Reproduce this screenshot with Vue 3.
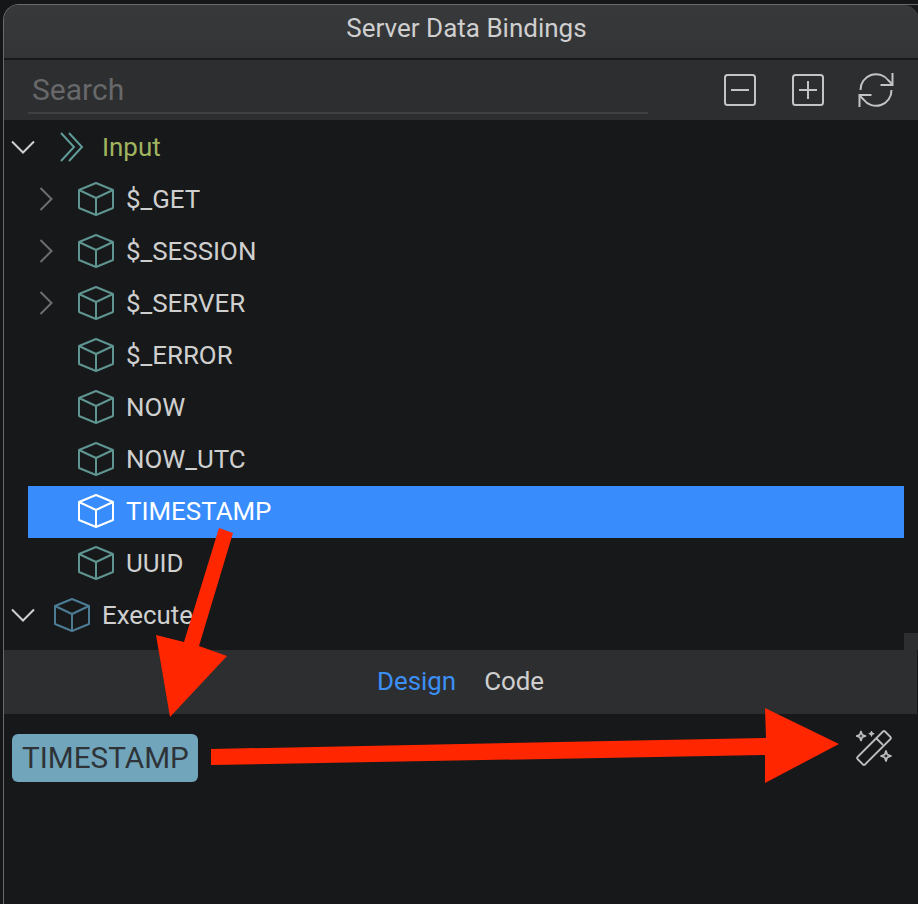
<script setup>
const rows = [
  { label: '$_GET', arrow: true },
  { label: '$_SESSION', arrow: true },
  { label: '$_SERVER', arrow: true },
  { label: '$_ERROR' },
  { label: 'NOW' },
  { label: 'NOW_UTC' },
  { label: 'TIMESTAMP', selected: true },
  { label: 'UUID' },
]
</script>

<template>
  <div class="page">
    <div class="window">
      <header class="title">Server Data Bindings</header>
      <div class="toolbar">
        <div class="search">Search</div>
        <div class="tools">
          <svg class="tool" viewBox="0 0 34 34" fill="none" stroke="#c4c4c4" stroke-width="2">
            <rect x="2" y="2" width="30" height="30" rx="2.5" />
            <path d="M8 17h18" />
          </svg>
          <svg class="tool" viewBox="0 0 34 34" fill="none" stroke="#c4c4c4" stroke-width="2">
            <rect x="2" y="2" width="30" height="30" rx="2.5" />
            <path d="M8 17h18M17 8v18" />
          </svg>
          <svg class="tool refresh" viewBox="0 0 36 36" fill="none" stroke="#c4c4c4" stroke-width="2">
            <path d="M2.500 18a15.500 15.500 0 0 1 28-9.500L34 12" />
            <path d="M34.500 1v12h-12" />
            <path d="M33.500 18a15.500 15.500 0 0 1-28 9.500L2 24" />
            <path d="M1.500 35V23h12" />
          </svg>
        </div>
      </div>

      <div class="tree">
        <div class="row root">
          <svg class="chev-down" viewBox="0 0 24 14" fill="none" stroke="#d0d0d0" stroke-width="2"><path d="M1 1.500l11 11 11-11" /></svg>
          <svg class="chevrons" viewBox="0 0 24 30" fill="none" stroke="#5f9c98" stroke-width="2"><path d="M1 1l13 14L1 29M9 1l13 14L9 29" /></svg>
          <span class="input-label">Input</span>
        </div>

        <div v-for="r in rows" :key="r.label" class="row child" :class="{ selected: r.selected }">
          <span class="arrow-slot">
            <svg v-if="r.arrow" class="chev-right" viewBox="0 0 14 24" fill="none" stroke="#6e6e6e" stroke-width="2"><path d="M1.500 1l11 11-11 11" /></svg>
          </span>
          <svg class="cube" viewBox="0 0 36 34" fill="none" stroke-width="2" stroke-linejoin="round">
            <path d="M18 1 35 8v18l-17 7-17-7V8zM1 8l17 8 17-8M18 16v17" />
          </svg>
          <span>{{ r.label }}</span>
        </div>

        <div class="row root">
          <svg class="chev-down" viewBox="0 0 24 14" fill="none" stroke="#d0d0d0" stroke-width="2"><path d="M1 1.500l11 11 11-11" /></svg>
          <svg class="cube execute" viewBox="0 0 36 34" fill="none" stroke-width="2" stroke-linejoin="round">
            <path d="M18 1 35 8v18l-17 7-17-7V8zM1 8l17 8 17-8M18 16v17" />
          </svg>
          <span>Execute</span>
        </div>
        <div class="scroll-corner"></div>
      </div>

      <div class="tabs">
        <span class="tab active">Design</span>
        <span class="tab">Code</span>
      </div>

      <div class="editor">
        <span class="chip">TIMESTAMP</span>
        <svg class="wand" viewBox="0 0 38 38" fill="none" stroke="#bdbdbd" stroke-width="1.800" stroke-linejoin="round">
          <path d="M29 1.500l5.500 5.500a1.500 1.500 0 0 1 0 2L9 34.500a1.500 1.500 0 0 1-2 0L1.500 29a1.500 1.500 0 0 1 0-2L27 1.500a1.500 1.500 0 0 1 2 0z" />
          <path d="M20.500 8.500l6.500 6.500" />
          <path d="M5 1.500 6.200 4.800 9.500 6 6.200 7.200 5 10.500 3.800 7.200 0.500 6 3.800 4.800z" />
          <path d="M15.500 1 16.200 3 18.200 3.700 16.200 4.400 15.500 6.400 14.800 4.400 12.800 3.700 14.800 3z" fill="#bdbdbd" stroke-width="1" />
          <path d="M30 21 31.300 24.700 35 26 31.300 27.300 30 31 28.700 27.300 25 26 28.700 24.700z" />
        </svg>
      </div>
    </div>

    <svg class="annotations" viewBox="0 0 918 904">
      <path d="M219 528 233 533 199 646 227 656 170 717 156 635 184 642z" fill="#ff2600" />
      <path d="M211 749 766 738 765 708 839 744 765 783 765 755 211 765z" fill="#ff2600" />
    </svg>
  </div>
</template>

<style>
html, body { margin: 0; background: #151618; }
</style>

<style scoped>
.page {
  position: relative;
  width: 918px;
  height: 904px;
  overflow: hidden;
  background: #151618;
  font-family: Roboto, "Liberation Sans", sans-serif;
  color: #cfcfcf;
  font-size: 25.900px;
}
.window {
  box-sizing: border-box;
  height: 908px;
  margin: 4px 0 0 3px;
  width: 930px;
  border-left: 1px solid #6a6a6b;
  border-top: 1px solid #6a6a6b;
  border-radius: 16px 16px 0 0;
  display: flex;
  flex-direction: column;
  background: #16181a;
}
.title {
  height: 55px;
  flex: none;
  width: 915px;
  box-sizing: border-box;
  padding: 0 0 8px 10px;
  border-radius: 15px 15px 0 0;
  background: linear-gradient(#38393b, #333436);
  border-bottom: 2px solid #18191b;
  display: flex;
  align-items: center;
  justify-content: center;
  font-size: 26px;
  color: #cfcfcf;
}
.toolbar {
  height: 60px;
  flex: none;
  display: flex;
  align-items: center;
  background: #2d2e30;
  padding-left: 24px;
}
.search {
  width: 620px;
  height: 42px;
  margin-top: 6px;
  box-sizing: border-box;
  padding-left: 4px;
  border-bottom: 2px solid #3f4042;
  color: #67686a;
  font-size: 30px;
  line-height: 36px;
}
.tools {
  display: flex;
  align-items: center;
  margin-left: 75px;
  gap: 34px;
}
.tool { width: 34px; height: 34px; display: block; }
.tool.refresh { width: 36px; height: 36px; margin-left: -1px; }
.tree {
  position: relative;
  height: 530px;
  flex: none;
  overflow: hidden;
  box-sizing: border-box;
  padding-top: 2px;
}
.row {
  height: 52px;
  box-sizing: border-box;
  padding-bottom: 2px;
  display: flex;
  align-items: center;
}
.root { padding-left: 7px; }
.chev-down { width: 24px; height: 14px; flex: none; }
.chevrons { width: 24px; height: 30px; margin-left: 25px; flex: none; }
.input-label { margin-left: 18px; color: #a0b460; }
.child { margin-left: 24px; width: 876px; }
.arrow-slot { width: 50px; flex: none; display: flex; padding-left: 11px; box-sizing: border-box; }
.chev-right { width: 14px; height: 24px; }
.cube { width: 36px; height: 34px; flex: none; margin-right: 12px; stroke: #5f9590; }
.execute { margin-left: 19px; margin-right: 12px; stroke: #4c7b94; }
.selected { background: #388cfb; color: #fff; }
.selected .cube { stroke: #fff; }
.scroll-corner {
  position: absolute;
  left: 900px;
  top: 513px;
  width: 14px;
  height: 17px;
  background: #2d2e30;
}
.tabs {
  height: 64px;
  flex: none;
  box-sizing: border-box;
  padding-bottom: 2px;
  background: #2d2e30;
  display: flex;
  align-items: center;
  justify-content: center;
  gap: 28px;
  width: 913px;
}
.tab.active { color: #3b8ff5; }
.editor {
  position: relative;
  flex: 1;
  padding: 20px 0 0 8px;
}
.chip {
  display: inline-block;
  box-sizing: border-box;
  height: 48px;
  line-height: 47px;
  padding: 0 9px 0 10px;
  border-radius: 6px;
  background: #71a5bb;
  color: #2e3338;
  font-size: 29.700px;
}
.wand {
  position: absolute;
  left: 852px;
  top: 16px;
  width: 38px;
  height: 38px;
}
.annotations {
  position: absolute;
  inset: 0;
  width: 918px;
  height: 904px;
}
</style>
